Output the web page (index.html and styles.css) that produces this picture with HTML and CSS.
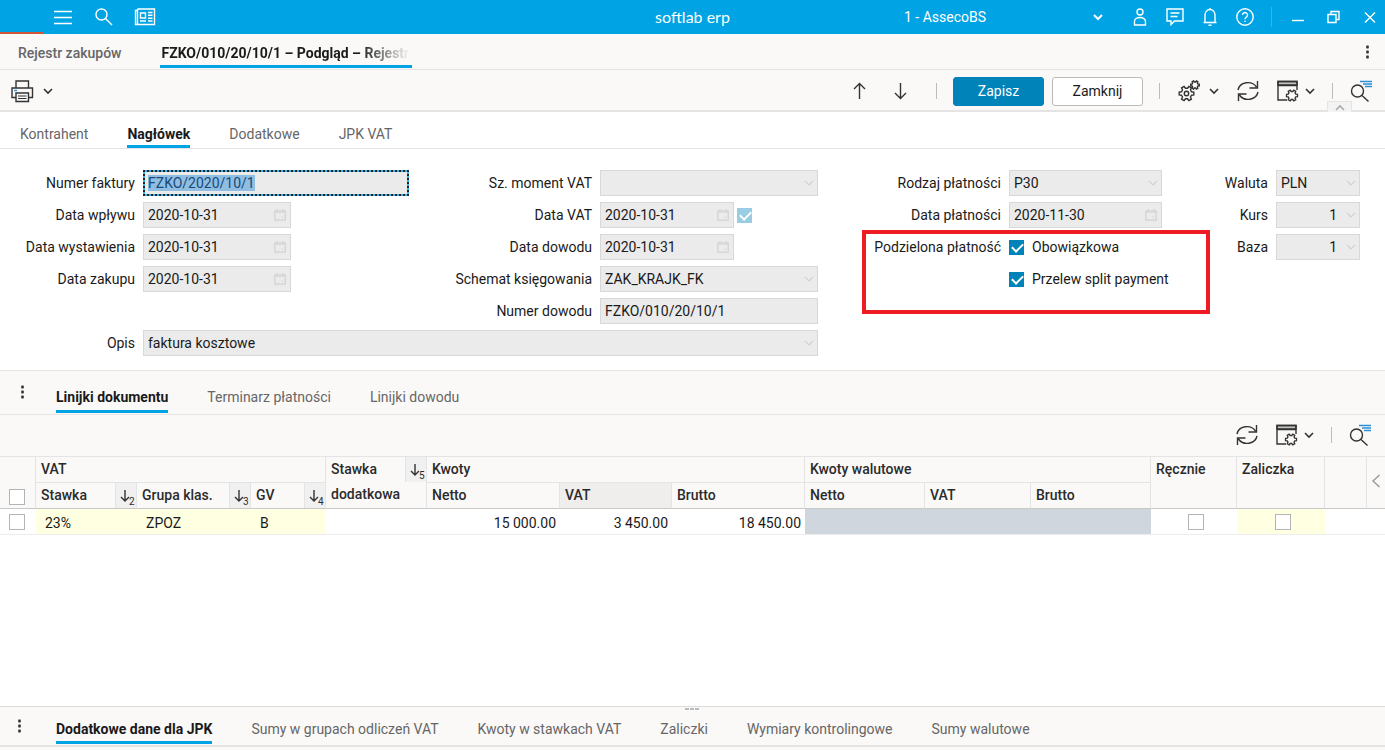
FILE: index.html
```html
<!DOCTYPE html>
<html lang="pl">
<head>
  <meta charset="UTF-8">
  <meta name="viewport" content="width=device-width, initial-scale=1.0">
  <title>softlab erp</title>
  <link rel="stylesheet" href="styles.css">
</head>
<body>
  <!-- shared icons -->
  <svg class="sprite" aria-hidden="true">
    <symbol id="i-chevron" viewBox="0 0 12 12"><path d="M2 4l4 4 4-4"/></symbol>
    <symbol id="i-calendar" viewBox="0 0 14 14"><path d="M1.800 3h10.400v9.200H1.800zM4 1v2M10 1v2"/><path d="M1.800 4h10.400M8.500 9h1.500"/></symbol>
    <symbol id="i-gear" viewBox="-8 -8 16 16"><path vector-effect="non-scaling-stroke" d="M6.87-1.34V1.34L4.73 1.63 3.77 3.280 4.590 5.280 2.280 6.620 .95 4.910-.95 4.910-2.280 6.620-4.590 5.280-3.770 3.280-4.730 1.630-6.870 1.340V-1.340L-4.730-1.630-3.770-3.280-4.590-5.280-2.280-6.620-.95-4.910 .95-4.910 2.280-6.620 4.590-5.280 3.770-3.280 4.730-1.630z"/></symbol>
    <symbol id="i-refresh" viewBox="0 0 24 24"><path d="M2 11A10 8.800 0 0 1 20.500 8M22 13A10 8.800 0 0 1 3.500 16M21.500 2v7h-8M2.500 22v-7h8"/></symbol>
    <symbol id="i-window" viewBox="0 0 24 24">
      <path class="bar" d="M2 2.500h19v3.500H2z"/>
      <path d="M11 21H2V2.500h19V11M2 6.500h19"/>
      <use href="#i-gear" x="9.500" y="10" width="13" height="13"/>
    </symbol>
    <symbol id="i-find" viewBox="0 0 24 24">
      <circle cx="8.500" cy="12" r="6"/><path d="M13 16.500l6.500 6"/>
      <path class="blue" d="M11 2.500h12M14 5h9M16 7.500h7"/>
    </symbol>
    <symbol id="i-sort" viewBox="0 0 12 14"><path d="M6 1v11M2 8l4 4 4-4"/></symbol>
  </svg>

  <header class="topbar">
    <div class="topbar-left">
      <button class="icon-btn" aria-label="Menu"><svg viewBox="0 0 20 20"><path d="M1 4.500h18M1 10.500h18M1 16.500h18"/></svg></button>
      <button class="icon-btn" aria-label="Szukaj"><svg viewBox="0 0 20 20"><circle cx="7.500" cy="7.500" r="5.500"/><path d="M11.500 11.500l6.500 6.500"/></svg></button>
      <button class="icon-btn" aria-label="Wiadomości"><svg viewBox="0 0 22 20"><path d="M3.500 2h17v15.500h-19V3.500h2M3.500 2v15.500M6.500 6h5v5h-5zM6 14h6M14 5.500h4.500M14 8.300h4.500M14 11.200h4.500M14 14h4.500"/></svg></button>
    </div>
    <div class="brand">softlab erp</div>
    <div class="topbar-right">
      <div class="company">
        <select aria-label="Firma"><option>1 - AssecoBS</option></select>
        <svg class="chevron"><use href="#i-chevron"/></svg>
      </div>
      <button class="icon-btn" aria-label="Użytkownik"><svg viewBox="0 0 20 20"><circle cx="10" cy="5" r="3"/><path d="M4.500 18v-3.500a5.500 4 0 0 1 11 0V18z"/></svg></button>
      <button class="icon-btn" aria-label="Czat"><svg viewBox="0 0 20 20"><path d="M2 2h16v12H9.500L6 17.500V14H2zM5.500 6h9M5.500 9.500h7"/></svg></button>
      <button class="icon-btn" aria-label="Powiadomienia"><svg viewBox="0 0 20 20"><path d="M5 15V8a5 5.500 0 0 1 10 0v7M3.500 15.500h13M8.500 18.200h3M10 1v1.500"/></svg></button>
      <button class="icon-btn" aria-label="Pomoc"><svg viewBox="0 0 20 20"><circle cx="10" cy="10" r="8.200"/><path d="M7.500 8a2.500 2.500 0 1 1 4 2q-1.500 1-1.500 2.300M10 13.700v1.300"/></svg></button>
      <span class="top-sep"></span>
      <button class="icon-btn" aria-label="Minimalizuj"><svg viewBox="0 0 20 20"><path d="M4 13.500h12"/></svg></button>
      <button class="icon-btn" aria-label="Przywróć"><svg viewBox="0 0 20 20"><path d="M5 7.500h8v8H5zM8 7V4.500h8v8h-2.500"/></svg></button>
      <button class="icon-btn" aria-label="Zamknij okno"><svg viewBox="0 0 20 20"><path d="M7 5.500l10 10M17 5.500l-10 10"/></svg></button>
    </div>
    <div class="progress"></div>
  </header>

  <nav class="doc-tabs">
    <a href="#" class="doc-tab">Rejestr zakupów</a>
    <a href="#" class="doc-tab active">FZKO/010/20/10/1 – Podgląd – Rejestr</a>
    <button class="dots push" aria-label="Więcej"></button>
  </nav>

  <div class="toolbar main-toolbar">
    <button class="split wide" aria-label="Drukuj">
      <svg class="ico" viewBox="0 0 24 24"><path d="M6 9V2h12.500v7M6 18.500H2V9h20.500v9.500h-4"/><path d="M6 14h12.500v8.500H6z"/><path class="thin" d="M8 17h8.500M8 19.500h8.500"/><path class="blue" d="M4 11.500h3"/></svg>
      <svg class="chevron"><use href="#i-chevron"/></svg>
    </button>
    <button class="arrow push" aria-label="Poprzedni"><svg class="ico" viewBox="0 0 24 24"><path d="M12.500 20V4.500M7 10l5.500-5.500L18 10"/></svg></button>
    <button class="arrow" aria-label="Następny"><svg class="ico" viewBox="0 0 24 24"><path d="M12.500 4v15.500M7 14l5.500 5.500L18 14"/></svg></button>
    <span class="sep"></span>
    <button class="btn btn-primary">Zapisz</button>
    <button class="btn">Zamknij</button>
    <span class="sep"></span>
    <button class="split wide" aria-label="Operacje">
      <svg class="ico" viewBox="0 0 24 24">
        <use href="#i-gear" x="2" y="6" width="17" height="17"/>
        <circle cx="10.500" cy="14.500" r="2.200"/>
        <use href="#i-gear" x="14" y="1" width="10" height="10"/>
      </svg>
      <svg class="chevron"><use href="#i-chevron"/></svg>
    </button>
    <button class="tool" aria-label="Odśwież"><svg class="ico"><use href="#i-refresh"/></svg></button>
    <button class="split tool" aria-label="Ustawienia widoku"><svg class="ico"><use href="#i-window"/></svg><svg class="chevron"><use href="#i-chevron"/></svg></button>
    <span class="sep"></span>
    <button aria-label="Filtruj"><svg class="ico"><use href="#i-find"/></svg></button>
    <button class="collapse" aria-label="Zwiń"><svg class="chevron up"><use href="#i-chevron"/></svg></button>
  </div>

  <nav class="tabs head-tabs">
    <a href="#">Kontrahent</a>
    <a href="#" class="active">Nagłówek</a>
    <a href="#">Dodatkowe</a>
    <a href="#">JPK VAT</a>
  </nav>

  <form class="form">
    <label class="c1 r1" for="numer">Numer faktury</label>
    <div class="field f1 r1"><input id="numer" class="selected" type="text" value="FZKO/2020/10/1" readonly></div>
    <label class="c1 r2" for="wplyw">Data wpływu</label>
    <div class="field date f1 r2"><input id="wplyw" type="text" value="2020-10-31" readonly><svg class="cal"><use href="#i-calendar"/></svg></div>
    <label class="c1 r3" for="wyst">Data wystawienia</label>
    <div class="field date f1 r3"><input id="wyst" type="text" value="2020-10-31" readonly><svg class="cal"><use href="#i-calendar"/></svg></div>
    <label class="c1 r4" for="zakup">Data zakupu</label>
    <div class="field date f1 r4"><input id="zakup" type="text" value="2020-10-31" readonly><svg class="cal"><use href="#i-calendar"/></svg></div>
    <label class="c1 r6" for="opis">Opis</label>
    <div class="field opis r6"><select id="opis"><option>faktura kosztowe</option></select><svg class="chevron"><use href="#i-chevron"/></svg></div>

    <label class="c2 r1" for="moment">Sz. moment VAT</label>
    <div class="field f2 r1"><select id="moment"><option></option></select><svg class="chevron"><use href="#i-chevron"/></svg></div>
    <label class="c2 r2" for="datavat">Data VAT</label>
    <div class="pair f2 r2">
      <div class="field date short"><input id="datavat" type="text" value="2020-10-31" readonly><svg class="cal"><use href="#i-calendar"/></svg></div>
      <input type="checkbox" class="check" aria-label="Data VAT aktywna" checked disabled>
    </div>
    <label class="c2 r3" for="dowod">Data dowodu</label>
    <div class="field date short f2 r3"><input id="dowod" type="text" value="2020-10-31" readonly><svg class="cal"><use href="#i-calendar"/></svg></div>
    <label class="c2 r4" for="schemat">Schemat księgowania</label>
    <div class="field f2 r4"><select id="schemat"><option>ZAK_KRAJK_FK</option></select><svg class="chevron"><use href="#i-chevron"/></svg></div>
    <label class="c2 r5" for="nrdowodu">Numer dowodu</label>
    <div class="field f2 r5"><input id="nrdowodu" type="text" value="FZKO/010/20/10/1" readonly></div>

    <label class="c3 r1" for="rodzaj">Rodzaj płatności</label>
    <div class="field f3 r1"><select id="rodzaj"><option>P30</option></select><svg class="chevron"><use href="#i-chevron"/></svg></div>
    <label class="c3 r2" for="platnosc">Data płatności</label>
    <div class="field f3 r2"><input id="platnosc" type="text" value="2020-11-30" readonly><svg class="cal"><use href="#i-calendar"/></svg></div>
    <span class="form-label c3 r3">Podzielona płatność</span>
    <label class="option f3 r3"><input type="checkbox" class="check" checked>Obowiązkowa</label>
    <label class="option f3 r4"><input type="checkbox" class="check" checked>Przelew split payment</label>
    <div class="highlight"></div>

    <label class="c4 r1" for="waluta">Waluta</label>
    <div class="field f4 r1"><select id="waluta"><option>PLN</option></select><svg class="chevron"><use href="#i-chevron"/></svg></div>
    <label class="c4 r2" for="kurs">Kurs</label>
    <div class="field number f4 r2"><input id="kurs" type="text" value="1" readonly><svg class="chevron"><use href="#i-chevron"/></svg></div>
    <label class="c4 r3" for="baza">Baza</label>
    <div class="field number f4 r3"><input id="baza" type="text" value="1" readonly><svg class="chevron"><use href="#i-chevron"/></svg></div>
  </form>

  <nav class="tabs line-tabs">
    <button class="dots" aria-label="Więcej"></button>
    <a href="#" class="active">Linijki dokumentu</a>
    <a href="#">Terminarz płatności</a>
    <a href="#">Linijki dowodu</a>
  </nav>

  <div class="toolbar grid-toolbar">
    <button class="push" aria-label="Odśwież"><svg class="ico"><use href="#i-refresh"/></svg></button>
    <button class="split tool" aria-label="Ustawienia widoku"><svg class="ico"><use href="#i-window"/></svg><svg class="chevron"><use href="#i-chevron"/></svg></button>
    <span class="sep"></span>
    <button aria-label="Filtruj"><svg class="ico"><use href="#i-find"/></svg></button>
  </div>

  <main class="grid-area">
    <table class="grid">
      <colgroup>
        <col class="w-check"><col class="w-rate"><col class="w-group"><col class="w-gv"><col class="w-rate">
        <col class="w-amount"><col class="w-vat"><col class="w-amount">
        <col class="w-cur"><col class="w-curvat"><col class="w-cur">
        <col class="w-manual"><col class="w-advance"><col class="w-empty"><col class="w-more">
      </colgroup>
      <thead>
        <tr>
          <th rowspan="2" class="tick bottom"><input type="checkbox" class="check" aria-label="Zaznacz wszystko"></th>
          <th colspan="3">VAT</th>
          <th rowspan="2" class="two-line"><div class="th-sort"><span>Stawka<br>dodatkowa</span><span class="sort"><svg><use href="#i-sort"/></svg>5</span></div></th>
          <th colspan="3">Kwoty</th>
          <th colspan="3">Kwoty walutowe</th>
          <th rowspan="2">Ręcznie</th>
          <th rowspan="2">Zaliczka</th>
          <th rowspan="2"></th>
          <th rowspan="2" class="more"><svg viewBox="0 0 10 14"><path d="M8.500 1L2 7l6.500 6"/></svg></th>
        </tr>
        <tr>
          <th><div class="th-sort"><span>Stawka</span><span class="sort"><svg><use href="#i-sort"/></svg>2</span></div></th>
          <th><div class="th-sort"><span>Grupa klas.</span><span class="sort"><svg><use href="#i-sort"/></svg>3</span></div></th>
          <th><div class="th-sort"><span>GV</span><span class="sort"><svg><use href="#i-sort"/></svg>4</span></div></th>
          <th>Netto</th>
          <th class="current">VAT</th>
          <th>Brutto</th>
          <th>Netto</th>
          <th>VAT</th>
          <th>Brutto</th>
        </tr>
      </thead>
      <tbody>
        <tr>
          <td class="tick"><input type="checkbox" class="check" aria-label="Zaznacz wiersz"></td>
          <td class="edit">23%</td>
          <td class="edit">ZPOZ</td>
          <td class="edit">B</td>
          <td></td>
          <td class="num">15 000.00</td>
          <td class="num">3 450.00</td>
          <td class="num">18 450.00</td>
          <td class="off"></td>
          <td class="off"></td>
          <td class="off"></td>
          <td class="mid"><input type="checkbox" class="check" aria-label="Ręcznie"></td>
          <td class="mid edit"><input type="checkbox" class="check" aria-label="Zaliczka"></td>
          <td></td>
          <td></td>
        </tr>
      </tbody>
    </table>
  </main>

  <nav class="tabs foot-tabs">
    <button class="dots" aria-label="Więcej"></button>
    <a href="#" class="active">Dodatkowe dane dla JPK</a>
    <a href="#">Sumy w grupach odliczeń VAT</a>
    <a href="#">Kwoty w stawkach VAT</a>
    <a href="#">Zaliczki</a>
    <a href="#">Wymiary kontrolingowe</a>
    <a href="#">Sumy walutowe</a>
    <span class="splitter"></span>
  </nav>

  <script>
    const numer = document.getElementById('numer');
    numer.focus();
    numer.select();
  </script>
</body>
</html>
```
FILE: styles.css
```css
* {
  box-sizing: border-box;
}
body {
  margin: 0;
  min-height: 100vh;
  display: flex;
  flex-direction: column;
  font-family: Roboto, sans-serif;
  font-size: 14px;
  line-height: 20px;
  color: #1a1a1a;
  background-color: #faf9f8;
}
button, input, select {
  font: inherit;
  color: inherit;
  margin: 0;
}
button {
  padding: 0;
  border: none;
  background: none;
  cursor: pointer;
}
a {
  color: #666;
  text-decoration: none;
}
svg {
  display: block;
  flex: none;
  fill: none;
  stroke: #333;
  stroke-width: 1.4;
}
.sprite {
  position: absolute;
  width: 0;
  height: 0;
}
.blue {
  stroke: #2d8fd5;
}
.bar {
  fill: #c4c4c0;
}
.thin {
  stroke-width: 1;
}
.chevron {
  width: 12px;
  height: 12px;
  stroke-width: 1.6;
}
.push {
  margin-left: auto;
}

/* top bar */
.topbar {
  position: relative;
  display: grid;
  grid-template-columns: 1fr auto 1fr;
  align-items: center;
  height: 34px;
  background-color: #00a4e4;
  color: #fff;
}
.topbar svg {
  stroke: #fff;
}
.topbar-left {
  display: flex;
  padding-left: 42px;
}
.icon-btn {
  display: flex;
  align-items: center;
  justify-content: center;
  width: 35px;
  height: 34px;
}
.icon-btn svg {
  width: 20px;
  height: 20px;
}
.topbar-left .icon-btn {
  width: 41px;
}
.topbar-left svg {
  width: 22px;
}
.brand {
  font-family: Lato, sans-serif;
  font-size: 16px;
}
.topbar-right {
  display: flex;
  align-items: center;
  justify-content: flex-end;
}
.company {
  position: relative;
  width: 200px;
  margin-right: 18px;
}
.company select {
  width: 100%;
  padding: 0;
  appearance: none;
  border: none;
  background: none;
}
.company .chevron {
  position: absolute;
  right: 0;
  top: 4px;
  stroke-width: 2;
  pointer-events: none;
}
.top-sep {
  width: 1px;
  height: 20px;
  margin: 0 8px 0 9px;
  background-color: #33b6ea;
}
.progress {
  position: absolute;
  left: 0;
  bottom: 0;
  width: 43px;
  height: 2px;
  background-color: #d2553a;
}

/* document tabs */
.doc-tabs {
  display: flex;
  align-items: stretch;
  height: 36px;
  padding: 0 12px 0 16px;
  border-bottom: 1px solid #e4e4e4;
  font-weight: 500;
}
.doc-tab {
  padding: 9px 2px 0;
  border-bottom: 3px solid transparent;
  margin: 0 0 1px;
}
.doc-tab.active {
  width: 252px;
  margin-left: 36px;
  white-space: nowrap;
  color: #1a1a1a;
  font-weight: 700;
  border-bottom-color: #00a4e4;
  background: linear-gradient(90deg, #1a1a1a 200px, #faf9f8 250px) text;
  -webkit-text-fill-color: transparent;
}
.dots {
  align-self: center;
  width: 12px;
  height: 16px;
  background: radial-gradient(circle, #333 1px, transparent 2px) center / 5px 5px repeat-y;
}

/* toolbars */
.toolbar {
  position: relative;
  display: flex;
  align-items: center;
  height: 42px;
  padding: 0 13px 1px 10px;
  border-bottom: 1px solid #e4e4e4;
}
.main-toolbar {
  padding: 2px 12px 0 10px;
  border-bottom-width: 2px;
}
.ico {
  width: 24px;
  height: 24px;
}
.split {
  display: flex;
  align-items: center;
  gap: 4px;
}
.split.wide {
  gap: 8px;
}
.arrow {
  display: flex;
  justify-content: center;
  width: 41px;
}
.tool {
  margin-left: 16px;
}
.sep {
  width: 1px;
  height: 16px;
  margin: 0 16px;
  background-color: #bbb;
}
.btn {
  width: 91px;
  height: 29px;
  border: 1px solid #bbb;
  border-radius: 3px;
  background-color: #fff;
}
.btn-primary {
  margin-right: 8px;
  border-color: #0083b8;
  background-color: #0083b8;
  color: #fff;
}
.collapse {
  position: absolute;
  right: 33px;
  bottom: -2px;
  display: flex;
  justify-content: center;
  width: 25px;
  height: 11px;
  border: 1px solid #e4e4e4;
  border-bottom: none;
  background-color: #f3f3f3;
}
.collapse svg {
  stroke: #aaa;
}
.up {
  transform: rotate(180deg);
}

/* tabs */
.tabs {
  position: relative;
  display: flex;
  gap: 39px;
  padding-left: 20px;
  border-bottom: 1px solid #e4e4e4;
}
.tabs a {
  border-bottom: 3px solid transparent;
}
.tabs a.active {
  color: #1a1a1a;
  font-weight: 700;
  border-bottom-color: #00a4e4;
}
.head-tabs {
  height: 37px;
  background-color: #fff;
}
.head-tabs a {
  padding-top: 12px;
}
.line-tabs {
  height: 45px;
  padding: 0 0 1px 16px;
  border-top: 1px solid #e4e4e4;
}
.line-tabs a {
  padding-top: 16px;
}
.line-tabs .dots {
  margin-right: -11px;
}
.foot-tabs {
  height: 41px;
  padding: 0 0 1px 13px;
  margin-bottom: 3px;
  border-top: 1px solid #dcdcdc;
  border-bottom-width: 2px;
}
.foot-tabs a {
  padding-top: 12px;
}
.foot-tabs .dots {
  margin-right: -8px;
}
.splitter {
  position: absolute;
  top: 1px;
  left: 50%;
  width: 15px;
  height: 2px;
  margin-left: -8px;
  background: repeating-linear-gradient(90deg, #bbb 0 4px, transparent 4px 5px);
}

/* header form */
.form {
  display: grid;
  grid-template-columns: 135px minmax(0, 266fr) 175px minmax(0, 218fr) 175px minmax(0, 153fr) 98px minmax(0, 84fr);
  grid-auto-rows: 26px;
  gap: 6px 8px;
  padding: 21px 25px 14px 0;
  background-color: #fff;
}
.form label, .form-label {
  align-self: center;
  text-align: right;
  white-space: nowrap;
}
.c1 { grid-column: 1; }
.f1 { grid-column: 2; }
.c2 { grid-column: 3; }
.f2 { grid-column: 4; }
.c3 { grid-column: 5; }
.f3 { grid-column: 6; }
.c4 { grid-column: 7; }
.f4 { grid-column: 8; }
.opis { grid-column: 2 / 5; }
.r1 { grid-row: 1; }
.r2 { grid-row: 2; }
.r3 { grid-row: 3; }
.r4 { grid-row: 4; }
.r5 { grid-row: 5; }
.r6 { grid-row: 6; }
.field {
  position: relative;
}
.field input, .field select {
  display: block;
  width: 100%;
  height: 26px;
  padding: 0 4px;
  appearance: none;
  border: 1px solid #d8d8d8;
  border-radius: 0;
  outline: none;
  background-color: #ebebeb;
}
.field input.selected {
  padding: 0 3px;
  border: 2px dotted #222;
  background: linear-gradient(#ebebeb, #ebebeb) padding-box, #35b5e6 border-box;
}
.selected::selection {
  background-color: rgba(143, 189, 226, 0.99);
  color: #174a78;
}
.field.date {
  width: 148px;
}
.field.short {
  width: 134px;
}
.field.number input {
  padding-right: 22px;
  text-align: right;
}
.field .chevron, .cal {
  position: absolute;
  top: 7px;
  right: 3px;
  stroke: #d2d2d2;
  stroke-width: 1.2;
  pointer-events: none;
}
.cal {
  top: 6px;
  right: 4px;
  width: 14px;
  height: 14px;
}
.pair {
  display: flex;
  align-items: center;
  gap: 3px;
}
.form .option {
  display: flex;
  align-items: center;
  gap: 8px;
}
.highlight {
  grid-column: 5 / 8;
  grid-row: 3 / 6;
  margin: -4px 58px 10px 36px;
  border: 4px solid #ed1c24;
  pointer-events: none;
}
.check {
  position: relative;
  flex: none;
  width: 15px;
  height: 15px;
  appearance: none;
  border: 1px solid #b4b4b4;
  background-color: #fff;
}
.check:checked {
  border-color: #0083b8;
  background-color: #0083b8;
}
.check:checked::after {
  content: "";
  position: absolute;
  left: 4px;
  top: 0;
  width: 5px;
  height: 9px;
  border: solid #fff;
  border-width: 0 2px 2px 0;
  transform: rotate(45deg);
}
.check:disabled {
  border-color: #99cde3;
  background-color: #99cde3;
}

/* document lines */
.grid-area {
  flex: 1;
  background-color: #fff;
}
.grid {
  width: 100%;
  table-layout: fixed;
  border-collapse: separate;
  border-spacing: 0;
}
.grid th {
  height: 26px;
  padding: 0 5px;
  border-right: 1px solid #e4e4e4;
  border-bottom: 1px solid #e4e4e4;
  background-color: #faf9f8;
  color: #2b2b2b;
  font-weight: 500;
  line-height: 25px;
  text-align: left;
  vertical-align: top;
  white-space: nowrap;
}
.grid th[rowspan], .grid tr:last-child th {
  border-bottom-color: #c8c8c8;
}
.grid th.current {
  background-color: #efeeed;
}
.grid th.bottom {
  vertical-align: bottom;
}
.grid th.more {
  padding: 17px 0 0 4px;
  border-right: none;
}
.more svg {
  width: 10px;
  height: 14px;
  stroke: #999;
}
.th-sort {
  display: flex;
  justify-content: space-between;
  margin-right: -5px;
}
.sort {
  display: flex;
  align-items: center;
  width: 21px;
  height: 25px;
  margin-left: -10px;
  padding: 12px 0 0 3px;
  border-left: 1px solid #e4e4e4;
  background-color: #f0f0f0;
  font-size: 10px;
  font-weight: 400;
  line-height: 10px;
}
.sort svg {
  width: 12px;
  height: 14px;
  margin: -12px -2px 0 0;
}
.grid td {
  height: 26px;
  padding: 2px 9px 0;
  border-bottom: 1px solid #ececec;
  background-color: #fff;
  line-height: 20px;
}
.grid .tick {
  padding: 0 0 0 9px;
}
.grid .check {
  display: block;
  width: 16px;
  height: 16px;
}
.tick.bottom .check {
  margin-bottom: 3px;
}
.grid .mid {
  padding: 0 0 0 3px;
}
.mid .check {
  margin: 0 auto;
}
.grid td.num {
  padding-right: 4px;
  text-align: right;
}
.grid td.edit {
  background-color: #ffffe1;
}
.grid td.off {
  background-color: #cfd6dd;
}
.w-check { width: 36px; }
.w-rate { width: 101px; }
.w-group { width: 114px; }
.w-gv { width: 75px; }
.w-amount { width: 133px; }
.w-vat { width: 112px; }
.w-cur { width: 120px; }
.w-curvat { width: 106px; }
.w-manual { width: 86px; }
.w-advance { width: 88px; }
.w-empty { width: 42px; }
.w-more { width: 18px; }
```
